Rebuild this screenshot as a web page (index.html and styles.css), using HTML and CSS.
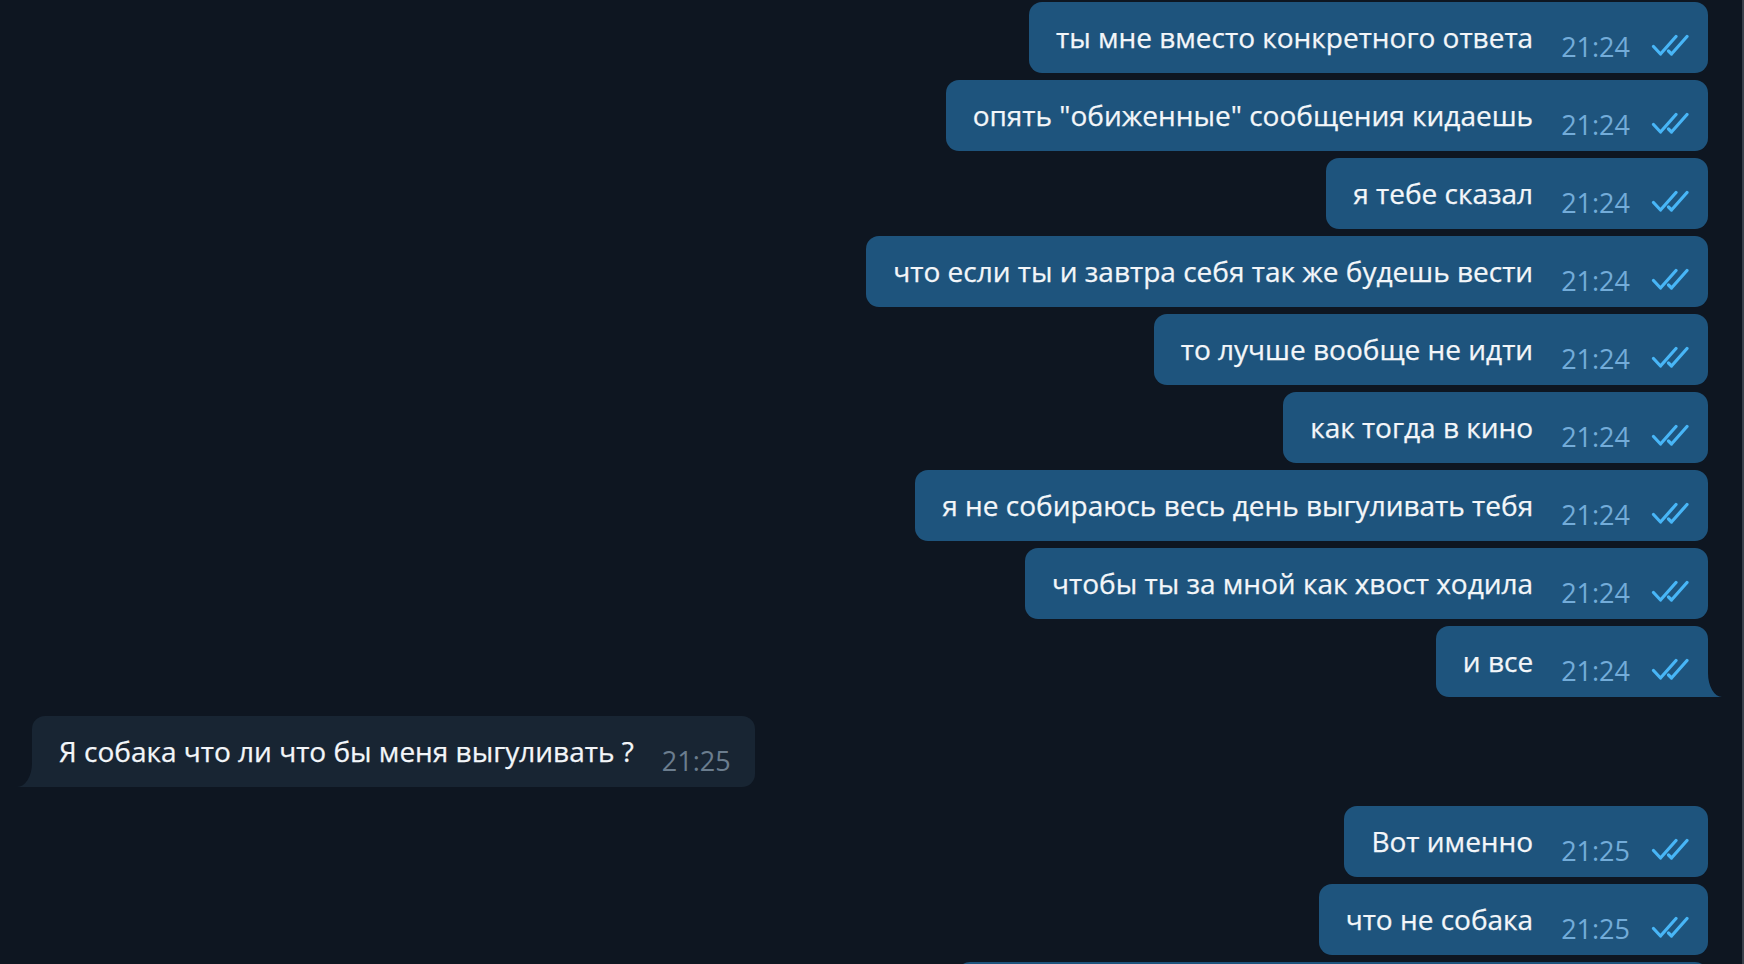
FILE: index.html
```html
<!DOCTYPE html>
<html lang="ru">
<head>
<meta charset="utf-8">
<title>Чат</title>
<link rel="stylesheet" href="styles.css">
</head>
<body>
<div class="window">
  <main class="chat">
    <div class="group out">
      <div class="bubble"><span class="text">ты мне вместо конкретного ответа</span><span class="meta"><span class="time">21:24</span><svg class="checks" viewBox="0 0 40 22"><path d="M2.5 12.5 L9.5 20 L25 2.5"/><path d="M17.5 17 L20.5 20 L36 2.5"/></svg></span></div>
      <div class="bubble"><span class="text">опять "обиженные" сообщения кидаешь</span><span class="meta"><span class="time">21:24</span><svg class="checks" viewBox="0 0 40 22"><path d="M2.5 12.5 L9.5 20 L25 2.5"/><path d="M17.5 17 L20.5 20 L36 2.5"/></svg></span></div>
      <div class="bubble"><span class="text">я тебе сказал</span><span class="meta"><span class="time">21:24</span><svg class="checks" viewBox="0 0 40 22"><path d="M2.5 12.5 L9.5 20 L25 2.5"/><path d="M17.5 17 L20.5 20 L36 2.5"/></svg></span></div>
      <div class="bubble"><span class="text">что если ты и завтра себя так же будешь вести</span><span class="meta"><span class="time">21:24</span><svg class="checks" viewBox="0 0 40 22"><path d="M2.5 12.5 L9.5 20 L25 2.5"/><path d="M17.5 17 L20.5 20 L36 2.5"/></svg></span></div>
      <div class="bubble"><span class="text">то лучше вообще не идти</span><span class="meta"><span class="time">21:24</span><svg class="checks" viewBox="0 0 40 22"><path d="M2.5 12.5 L9.5 20 L25 2.5"/><path d="M17.5 17 L20.5 20 L36 2.5"/></svg></span></div>
      <div class="bubble"><span class="text">как тогда в кино</span><span class="meta"><span class="time">21:24</span><svg class="checks" viewBox="0 0 40 22"><path d="M2.5 12.5 L9.5 20 L25 2.5"/><path d="M17.5 17 L20.5 20 L36 2.5"/></svg></span></div>
      <div class="bubble"><span class="text">я не собираюсь весь день выгуливать тебя</span><span class="meta"><span class="time">21:24</span><svg class="checks" viewBox="0 0 40 22"><path d="M2.5 12.5 L9.5 20 L25 2.5"/><path d="M17.5 17 L20.5 20 L36 2.5"/></svg></span></div>
      <div class="bubble"><span class="text">чтобы ты за мной как хвост ходила</span><span class="meta"><span class="time">21:24</span><svg class="checks" viewBox="0 0 40 22"><path d="M2.5 12.5 L9.5 20 L25 2.5"/><path d="M17.5 17 L20.5 20 L36 2.5"/></svg></span></div>
      <div class="bubble last"><span class="text">и все</span><span class="meta"><span class="time">21:24</span><svg class="checks" viewBox="0 0 40 22"><path d="M2.5 12.5 L9.5 20 L25 2.5"/><path d="M17.5 17 L20.5 20 L36 2.5"/></svg></span><svg class="tail" viewBox="0 0 14 24"><path d="M0 0 A14 24 0 0 0 14 24 L0 24 Z"/></svg></div>
    </div>

    <div class="group in">
      <div class="bubble last"><span class="text">Я собака что ли что бы меня выгуливать ?</span><span class="meta"><span class="time">21:25</span></span><svg class="tail" viewBox="0 0 15 24"><path d="M15 0 A15 24 0 0 1 0 24 L15 24 Z"/></svg></div>
    </div>

    <div class="group out">
      <div class="bubble"><span class="text">Вот именно</span><span class="meta"><span class="time">21:25</span><svg class="checks" viewBox="0 0 40 22"><path d="M2.5 12.5 L9.5 20 L25 2.5"/><path d="M17.5 17 L20.5 20 L36 2.5"/></svg></span></div>
      <div class="bubble"><span class="text">что не собака</span><span class="meta"><span class="time">21:25</span><svg class="checks" viewBox="0 0 40 22"><path d="M2.5 12.5 L9.5 20 L25 2.5"/><path d="M17.5 17 L20.5 20 L36 2.5"/></svg></span></div>
      <div class="bubble cut"></div>
    </div>
  </main>
  <div class="edge"></div>
</div>
</body>
</html>
```

FILE: styles.css
```css
html, body {
  margin: 0;
  padding: 0;
  background: #0e1621;
}

body {
  font-family: "Open Sans", "Noto Sans", sans-serif;
  color: #ffffff;
}

.window {
  display: flex;
  width: 1744px;
  height: 964px;
  overflow: hidden;
  background: #0e1621;
}

.chat {
  flex: 1;
  display: flex;
  flex-direction: column;
  gap: 19px;
  padding: 2px 34px 0 0;
  overflow: hidden;
}

.edge {
  width: 2px;
  flex: none;
  background: #39404a;
}

.group {
  display: flex;
  flex-direction: column;
  gap: 7px;
}

.group.out {
  align-items: flex-end;
}

.group.in {
  align-items: flex-start;
  padding-left: 32px;
}

.bubble {
  position: relative;
  display: flex;
  align-items: flex-start;
  box-sizing: border-box;
  height: 71px;
  flex: none;
  padding: 0 17.5px 0 27px;
  border-radius: 13px;
  background: #1e547d;
}

.in .bubble {
  background: #182533;
  padding-right: 24px;
}

.text {
  margin-top: 17px;
  font-size: 28px;
  line-height: 36px;
  white-space: nowrap;
  color: #f3f6f9;
  -webkit-text-stroke: 0.25px #f3f6f9;
}

.meta {
  display: flex;
  align-items: flex-start;
  margin-left: 28px;
}

.time {
  margin-top: 27px;
  font-size: 27px;
  line-height: 36px;
  color: #73acd9;
}

.in .time {
  color: #6b7d8e;
}

.checks {
  width: 40px;
  height: 22px;
  margin: 32px 0 0 20.5px;
  fill: none;
  stroke: #48b6f7;
  stroke-width: 3.2;
  stroke-linecap: round;
  stroke-linejoin: round;
}

.out .bubble.last {
  border-bottom-right-radius: 0;
}

.in .bubble.last {
  border-bottom-left-radius: 0;
}

.tail {
  position: absolute;
  bottom: 0;
  width: 14px;
  height: 24px;
}

.out .tail {
  right: -14px;
  fill: #1e547d;
}

.in .tail {
  left: -15px;
  width: 15px;
  fill: #182533;
}

.bubble.cut {
  width: 751px;
}
```
